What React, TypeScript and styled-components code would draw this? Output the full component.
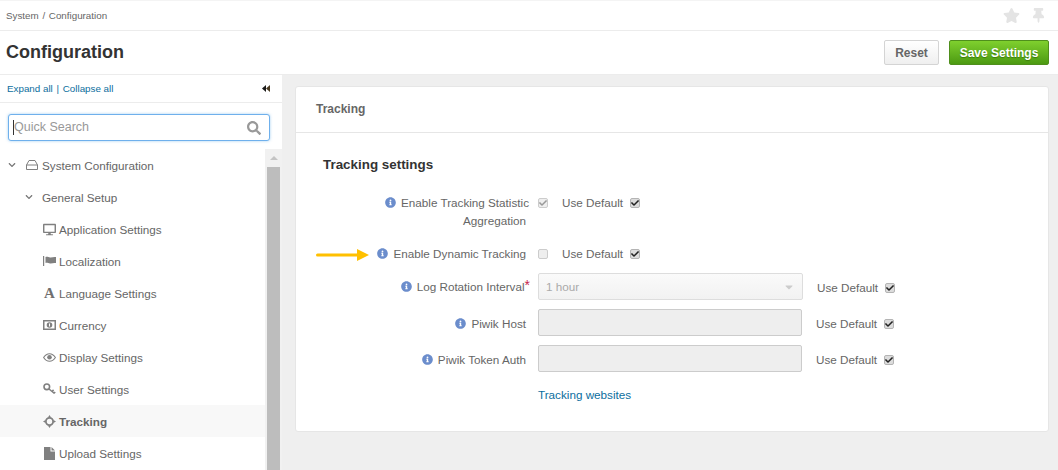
import React from "react";
import styled, { createGlobalStyle } from "styled-components";
import { FaStar, FaThumbtack, FaSearch, FaChevronDown, FaDesktop, FaInfoCircle, FaCheck, FaCaretDown } from "react-icons/fa";

const Global = createGlobalStyle`
  html, body { margin: 0; padding: 0; height: 100%; overflow: hidden; background: #fff; }
  * { box-sizing: border-box; }
  body { font-family: "Liberation Sans", Arial, sans-serif; font-size: 11.7px; color: #666; }
`;

const Page = styled.div`
  width: 1058px; height: 470px; overflow: hidden; display: flex; flex-direction: column; background: #efefef;
`;
const TopBar = styled.header`
  height: 31px; flex: none; background: #fff; border-top: 1px solid #f4f4f4; border-bottom: 1px solid #ececec;
  display: flex; align-items: center; justify-content: space-between; padding: 0 12px 0 6px;
`;
const Crumbs = styled.div`font-size: 9.8px; color: #666; word-spacing: 1px;`;
const Faint = styled.div`display: flex; gap: 11px; color: #e4e4e4; font-size: 15px; align-items: center;`;
const BigStar = styled.span`display: flex; font-size: 17px;`;
const TitleBar = styled.div`
  height: 44px; flex: none; background: #fff; border-bottom: 1px solid #ececec;
  display: flex; align-items: center; justify-content: space-between; padding: 0 9px 0 6px;
`;
const Title = styled.h1`margin: 0 0 1px; font-size: 18px; line-height: 22px; font-weight: 700; color: #333;`;
const Actions = styled.div`display: flex; gap: 10px;`;
const Btn = styled.button<{ $primary?: boolean }>`
  height: 25px; border-radius: 2px; font: 700 12px "Liberation Sans", Arial, sans-serif; padding: 0; cursor: pointer;
  width: ${p => (p.$primary ? "100px" : "55px")};
  color: ${p => (p.$primary ? "#fff" : "#666")};
  border: 1px solid ${p => (p.$primary ? "#4f8f1c" : "#d4d4d4")};
  background: ${p => (p.$primary ? "linear-gradient(#7fd02e,#4c9a12)" : "linear-gradient(#fff,#efefef)")};
  text-shadow: ${p => (p.$primary ? "0 1px 1px #3b7a0e" : "none")};
`;
const Body = styled.div`flex: 1; display: flex; min-height: 0;`;
const Side = styled.aside`width: 282px; flex: none; display: flex; flex-direction: column; background: #fff; min-height: 0;`;
const Expand = styled.div`
  height: 28px; flex: none; border-bottom: 1px solid #ececec; padding: 0 12px 1px 7px;
  display: flex; align-items: center; justify-content: space-between; font-size: 9.8px; color: #0b6e9e;
`;
const Sep = styled.span`margin: 0 1px;`;
const SearchWrap = styled.div`
  margin: 11px 12px 8px 8px; height: 27px; flex: none; border: 1px solid #6fb0ec; border-radius: 3px;
  box-shadow: 0 0 3px rgba(102,175,233,.6); display: flex; align-items: center; justify-content: space-between; padding: 0 8px 0 4px;
  font-size: 12.5px; color: #999; background: #fff;
`;
const SearchText = styled.span`border-left: 1px solid #333; line-height: 15px;`;
const SearchIcon = styled.span`display: flex; font-size: 14px; color: #999;`;
const TreeArea = styled.div`flex: 1; display: flex; min-height: 0;`;
const Tree = styled.nav`width: 265px; flex: none; display: flex; flex-direction: column;`;
const Row = styled.div<{ $level: number; $active?: boolean }>`
  height: 32px; display: flex; align-items: center; color: #666; flex: none;
  padding-left: ${p => [8, 25, 43][p.$level]}px;
  background: ${p => (p.$active ? "#f8f8f8" : "transparent")};
  font-weight: ${p => (p.$active ? 700 : 400)};
`;
const Chev = styled.span`display: flex; width: 9px; font-size: 8px; color: #777; margin-right: 8px;`;
const RowIcon = styled.span`display: flex; width: 13px; margin-right: 3px; font-size: 13px; color: #808080; justify-content: center; align-items: center;`;
const HddIcon = styled(RowIcon)`margin-right: 4px;`;
const SerifA = styled(RowIcon)`font: 700 15px "Liberation Serif", serif; color: #707070;`;
const Scroll = styled.div`flex: 1; display: flex; flex-direction: column; background: #f1f1f1; padding: 0 2px;`;
const ScrollUp = styled.div`height: 18px; flex: none; position: relative; &::after { content: ""; position: absolute; left: 3px; top: 7px; border: 4px solid transparent; border-top: 0; border-bottom: 4px solid #c4c4c4; }`;
const Thumb = styled.div`flex: 1; background: #bdbdbd;`;
const Content = styled.main`flex: 1; padding: 11px 9px 0 13px; position: relative; min-width: 0;`;
const Card = styled.section`height: 346px; background: #fff; border: 1px solid #e6e6e6; border-radius: 3px;`;
const CardHead = styled.div`height: 46px; border-bottom: 1px solid #e6e6e6; display: flex; align-items: center; padding: 0 0 2px 20px; font-size: 12px; font-weight: 700; color: #666;`;
const CardBody = styled.div`padding: 23px 0 0 27px;`;
const Section = styled.h2`margin: 0 0 22px; font-size: 13.4px; line-height: 17px; font-weight: 700; color: #333;`;
const Form = styled.div`display: flex; flex-direction: column; margin-top: -1px;`;
const FormRow = styled.div<{ $h: number }>`display: grid; grid-template-columns: 203px 1fr; column-gap: 12px; height: ${p => p.$h}px; align-items: start;`;
const Label = styled.div<{ $top?: number }>`text-align: right; line-height: 18px; color: #666; padding-top: ${p => p.$top ?? 0}px;`;
const Info = styled.span`display: inline-flex; color: #6b8dcc; font-size: 11px; margin-right: 5px; vertical-align: -1px;`;
const Over = styled.span`margin-right: -3px;`;
const Req = styled.span`color: #c7254e; font-size: 14px; line-height: 10px; margin-right: -4px; position: relative; top: -1px;`;
const Ctl = styled.div`display: flex; align-items: flex-start;`;
const Box = styled.span<{ $dark?: boolean }>`
  width: 10px; height: 10px; flex: none; border: 1px solid ${p => (p.$dark ? "#b4b4b4" : "#ccc")}; border-radius: 2px; background: ${p => (p.$dark ? "#dcdcdc" : "#eee")};
  display: inline-flex; align-items: center; justify-content: center; font-size: 8px; color: ${p => (p.$dark ? "#222" : "#999")};
`;
const DefaultText = styled.span`line-height: 14px; color: #666;`;
const UseDefault = styled.div<{ $left: number; $top: number }>`display: flex; align-items: center; gap: 7px; margin-left: ${p => p.$left}px; margin-top: ${p => p.$top}px;`;
const SelectBox = styled.div`
  width: 265px; height: 27px; border: 1px solid #ddd; border-radius: 2px; background: linear-gradient(#fafafa,#f2f2f2); color: #aaa;
  display: flex; align-items: center; justify-content: space-between; padding: 0 7px;
`;
const Caret = styled.span`display: flex; color: #ccc; font-size: 12px;`;
const Input = styled.div`width: 264px; height: 27px; border: 1px solid #ccc; border-radius: 2px; background: #eee;`;
const Link = styled.a`color: #0b6e9e; line-height: 14px; display: block; padding-top: 7px;`;
const Arrow = styled.svg`position: absolute; left: 34px; top: 174px;`;

const Hdd = () => (
  <svg width="12" height="10" viewBox="0 0 12 10" fill="none" stroke="#808080" strokeWidth="1"><path d="M3 .5h6l2.5 4.5v4.5H.5V5zM.5 5h11" /></svg>
);
const Flag = () => (
  <svg width="13" height="10" viewBox="0 0 13 10" fill="#808080"><rect x="0" y="0" width="1.2" height="10" /><path d="M2.5 1c2-.8 3.5.8 5.2.4 2-.4 3.5-.6 5.3-.4v6c-2-.3-3.3 0-5.3.4-1.8.4-3.2-1-5.2-.4z" /></svg>
);
const Money = () => (
  <svg width="13" height="10" viewBox="0 0 13 10"><path fill="#808080" fillRule="evenodd" d="M0 0h13v10H0zM1.5 1.5v7h10v-7z" /><circle cx="6.5" cy="5" r="2.8" fill="#808080" /><rect x="6" y="3.5" width="1" height="3" fill="#fff" /></svg>
);
const Eye = () => (
  <svg width="13" height="9" viewBox="0 0 13 9" fill="none" stroke="#808080"><path d="M.6 4.5C2.2 2 4.2.7 6.5.7s4.3 1.3 5.9 3.8c-1.6 2.5-3.6 3.8-5.9 3.8S2.2 7 .6 4.5z" strokeWidth="1.1" /><circle cx="6.5" cy="4.3" r="2.3" fill="#808080" stroke="none" /></svg>
);
const Key = () => (
  <svg width="13" height="12" viewBox="0 0 13 12" fill="none" stroke="#808080" strokeWidth="1.6"><circle cx="3.8" cy="3.8" r="2.8" /><path d="M6 6l5.5 4.5M9 8.5l1.6-1.6M11 10.2l1.2-1.2" /></svg>
);
const Target = () => (
  <svg width="13" height="13" viewBox="0 0 13 13" fill="#808080"><circle cx="6.5" cy="6.5" r="3.6" fill="none" stroke="#808080" strokeWidth="1.8" /><path d="M6.5 0l1.6 2.6H4.9zM6.5 13l1.6-2.6H4.9zM0 6.5l2.6-1.6v3.2zM13 6.5l-2.6-1.6v3.2z" /></svg>
);
const Doc = () => (
  <svg width="11" height="13" viewBox="0 0 11 13" fill="#808080"><path d="M0 0h6.5v4.5H11V13H0z" /><path d="M7.5 0L11 3.5H7.5z" /></svg>
);
const Rewind = () => (
  <svg width="8" height="7" viewBox="0 0 8 7"><path d="M0 3.5L4 0v7z" fill="#1a1a1a" /><path d="M4 3.5L8 0v7z" fill="#4a3a20" /></svg>
);

const items: [React.ReactNode, string, boolean?][] = [
  [<RowIcon><FaDesktop /></RowIcon>, "Application Settings"],
  [<RowIcon><Flag /></RowIcon>, "Localization"],
  [<SerifA>A</SerifA>, "Language Settings"],
  [<RowIcon><Money /></RowIcon>, "Currency"],
  [<RowIcon><Eye /></RowIcon>, "Display Settings"],
  [<RowIcon><Key /></RowIcon>, "User Settings"],
  [<RowIcon><Target /></RowIcon>, "Tracking", true],
  [<RowIcon><Doc /></RowIcon>, "Upload Settings"],
];

const Check = ({ dark, on = true }: { dark?: boolean; on?: boolean }) => (
  <Box $dark={dark}>{on && <FaCheck />}</Box>
);

export default function App() {
  return (
    <Page>
      <Global />
      <TopBar>
        <Crumbs>System / Configuration</Crumbs>
        <Faint><BigStar><FaStar /></BigStar><FaThumbtack /></Faint>
      </TopBar>
      <TitleBar>
        <Title>Configuration</Title>
        <Actions><Btn>Reset</Btn><Btn $primary>Save Settings</Btn></Actions>
      </TitleBar>
      <Body>
        <Side>
          <Expand><span>Expand all <Sep>|</Sep> Collapse all</span><Rewind /></Expand>
          <SearchWrap><SearchText>Quick Search</SearchText><SearchIcon><FaSearch /></SearchIcon></SearchWrap>
          <TreeArea>
            <Tree>
              <Row $level={0}><Chev><FaChevronDown /></Chev><HddIcon><Hdd /></HddIcon>System Configuration</Row>
              <Row $level={1}><Chev><FaChevronDown /></Chev>General Setup</Row>
              {items.map(([icon, text, active]) => (
                <Row key={text} $level={2} $active={active}>{icon}{text}</Row>
              ))}
            </Tree>
            <Scroll><ScrollUp /><Thumb /></Scroll>
          </TreeArea>
        </Side>
        <Content>
          <Arrow width="53" height="12" viewBox="0 0 53 12"><path d="M1.5 6h41" stroke="#ffc000" strokeWidth="3" strokeLinecap="round" /><path d="M41 0l12 6-12 6z" fill="#ffc000" /></Arrow>
          <Card>
            <CardHead>Tracking</CardHead>
            <CardBody>
              <Section>Tracking settings</Section>
              <Form>
                <FormRow $h={50}>
                  <Label $top={0}><Info><FaInfoCircle /></Info><Over>Enable Tracking Statistic</Over><br />Aggregation</Label>
                  <Ctl><UseDefault $left={0} $top={4}><Check /></UseDefault><UseDefault $left={14} $top={2}><DefaultText>Use Default</DefaultText><Check dark /></UseDefault></Ctl>
                </FormRow>
                <FormRow $h={29}>
                  <Label $top={1}><Info><FaInfoCircle /></Info>Enable Dynamic Tracking</Label>
                  <Ctl><UseDefault $left={0} $top={5}><Check on={false} /></UseDefault><UseDefault $left={14} $top={3}><DefaultText>Use Default</DefaultText><Check dark /></UseDefault></Ctl>
                </FormRow>
                <FormRow $h={36}>
                  <Label $top={5}><Info><FaInfoCircle /></Info>Log Rotation Interval<Req>*</Req></Label>
                  <Ctl><SelectBox>1 hour<Caret><FaCaretDown /></Caret></SelectBox><UseDefault $left={14} $top={8}><DefaultText>Use Default</DefaultText><Check dark /></UseDefault></Ctl>
                </FormRow>
                <FormRow $h={36}>
                  <Label $top={6}><Info><FaInfoCircle /></Info>Piwik Host</Label>
                  <Ctl><Input /><UseDefault $left={14} $top={8}><DefaultText>Use Default</DefaultText><Check dark /></UseDefault></Ctl>
                </FormRow>
                <FormRow $h={36}>
                  <Label $top={6}><Info><FaInfoCircle /></Info>Piwik Token Auth</Label>
                  <Ctl><Input /><UseDefault $left={14} $top={8}><DefaultText>Use Default</DefaultText><Check dark /></UseDefault></Ctl>
                </FormRow>
                <FormRow $h={30}>
                  <span />
                  <Link>Tracking websites</Link>
                </FormRow>
              </Form>
            </CardBody>
          </Card>
        </Content>
      </Body>
    </Page>
  );
}
